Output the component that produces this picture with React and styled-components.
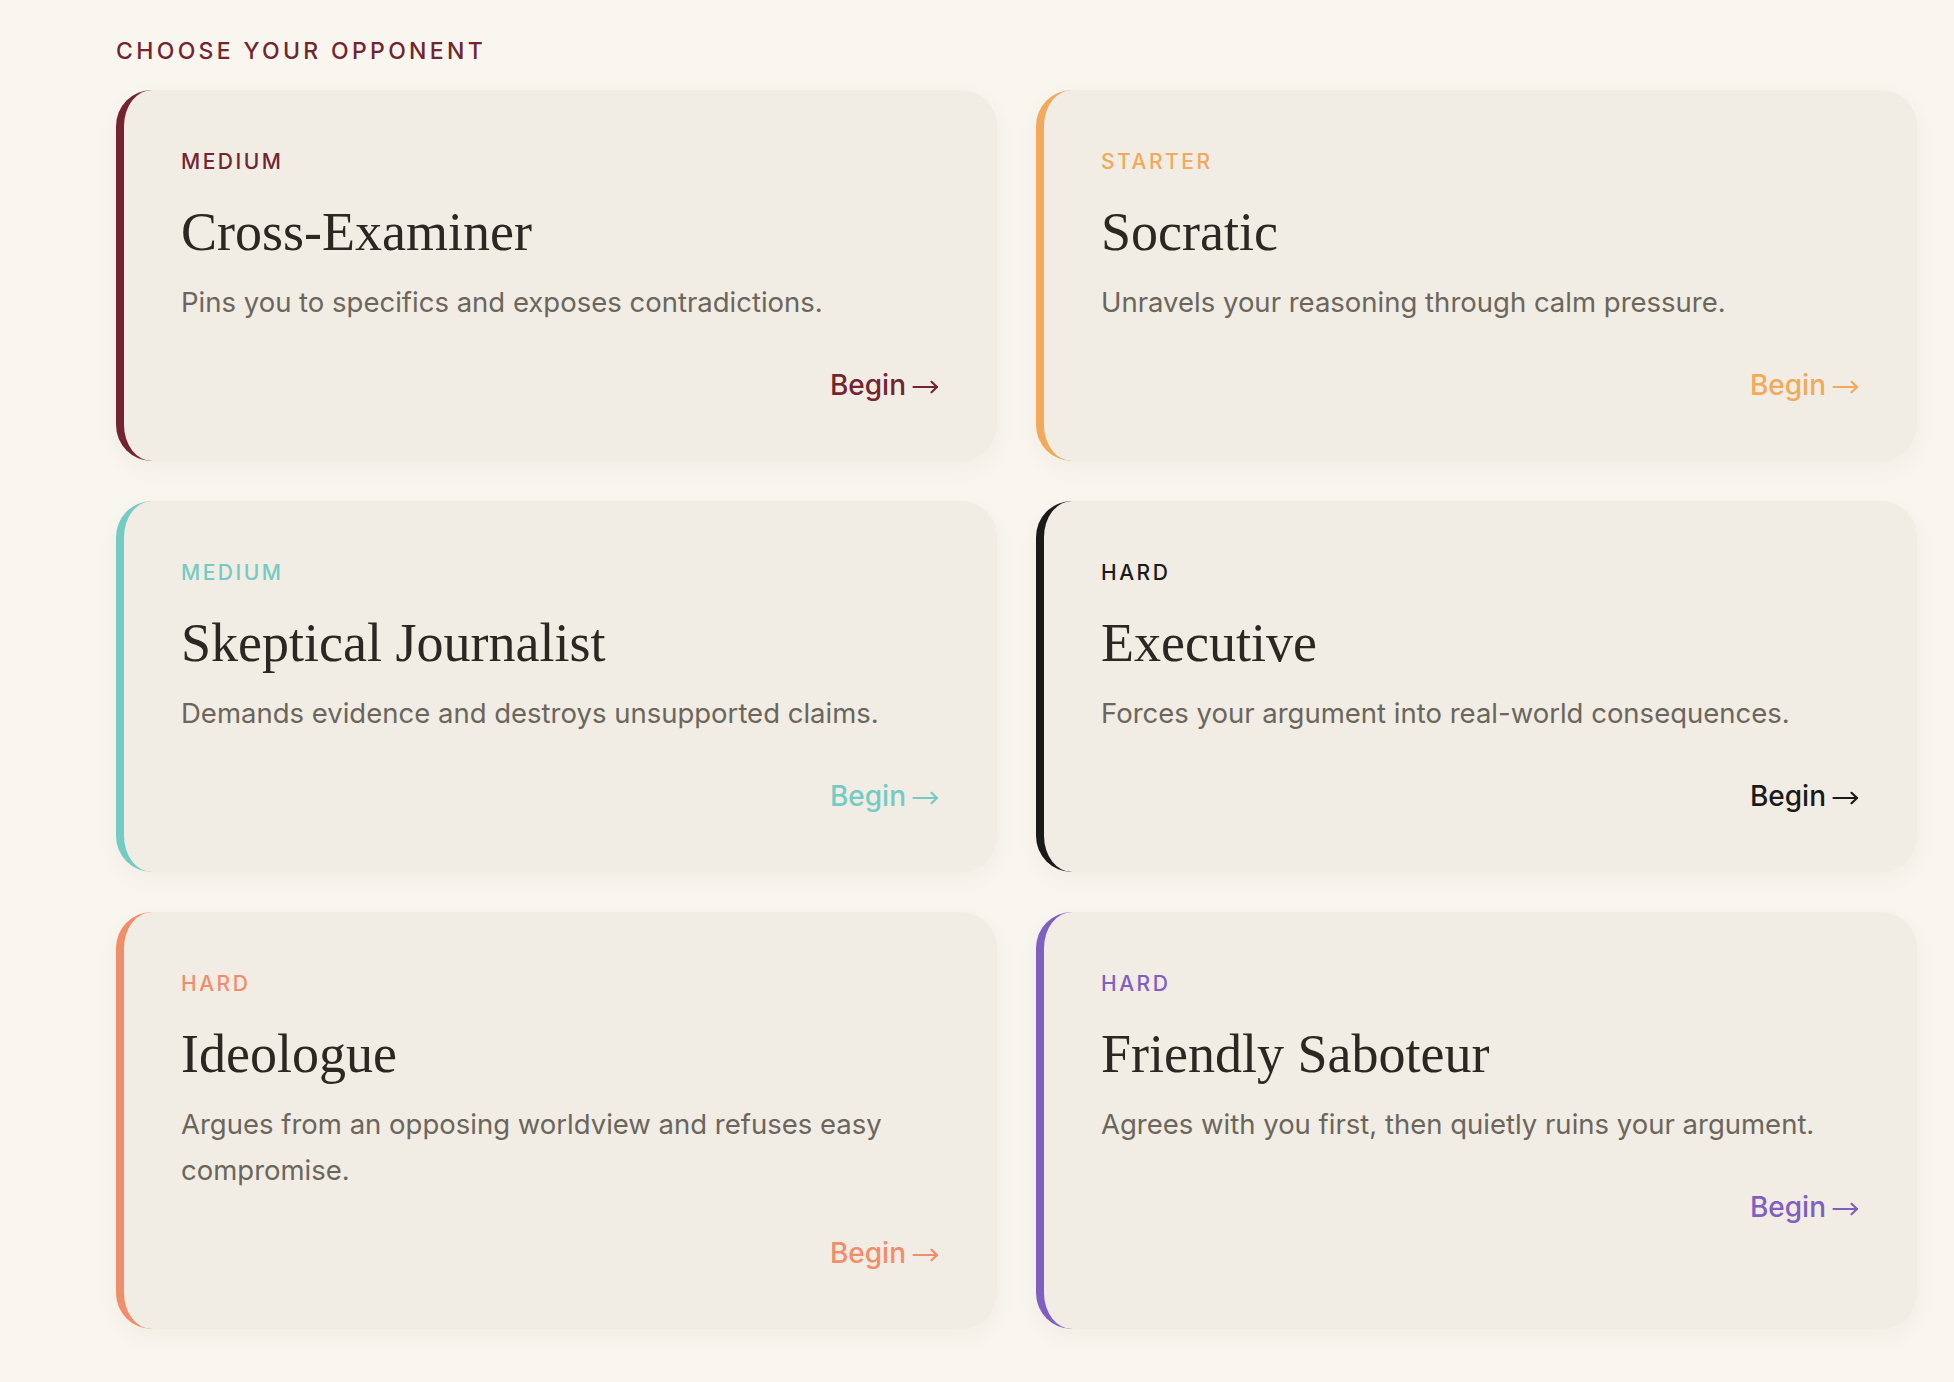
import React from "react";
import styled, { createGlobalStyle } from "styled-components";

const GlobalStyle = createGlobalStyle`
  html, body {
    margin: 0;
    padding: 0;
    background: #f9f6ef;
  }
  * { box-sizing: border-box; }
`;

const Page = styled.main`
  padding: 37px 37px 52px 116px;
  font-family: Inter, "Noto Sans", sans-serif;
`;

const Heading = styled.h2`
  margin: 0 0 25px;
  font-size: 23px;
  line-height: 28px;
  font-weight: 500;
  letter-spacing: 0.145em;
  color: #722530;
  text-transform: uppercase;
`;

const Grid = styled.div`
  display: grid;
  grid-template-columns: 1fr 1fr;
  gap: 40px 39px;
`;

const Card = styled.article`
  display: flex;
  flex-direction: column;
  background: #f1ece4;
  border-left: 8px solid ${(p) => p.$accent};
  border-radius: 36px;
  padding: 59px 58px 59px 57px;
  box-shadow: 0 8px 22px rgba(60, 40, 20, 0.045);
`;

const Level = styled.span`
  font-size: 21px;
  line-height: 26px;
  font-weight: 500;
  letter-spacing: 0.12em;
  text-transform: uppercase;
  color: ${(p) => p.$accent};
`;

const Title = styled.h3`
  margin: 26px 0 0;
  font-family: "Liberation Serif", "Times New Roman", serif;
  font-weight: 400;
  font-size: 54px;
  line-height: 63px;
  color: #2b2723;
`;

const Description = styled.p`
  margin: 15px 0 0;
  font-size: 27.5px;
  line-height: 46px;
  color: #6b665c;
`;

const Footer = styled.div`
  display: flex;
  justify-content: flex-end;
  margin-top: 43px;
`;

const BeginLink = styled.a`
  font-size: 28px;
  line-height: 34px;
  font-weight: 500;
  color: ${(p) => p.$accent};
  text-decoration: none;
  cursor: pointer;
  display: inline-flex;
  align-items: center;
  gap: 6px;
`;

const Arrow = styled.svg`
  width: 27px;
  height: 14px;
  margin-top: 3px;
  flex: none;
`;

const ArrowIcon = () => (
  <Arrow viewBox="0 0 27 14" fill="none" stroke="currentColor" strokeWidth="2.2" strokeLinecap="round" strokeLinejoin="round">
    <path d="M1.5 7H25" />
    <path d="M19.5 1.8L25 7l-5.5 5.2" />
  </Arrow>
);

const opponents = [
  {
    level: "Medium",
    name: "Cross-Examiner",
    desc: "Pins you to specifics and exposes contradictions.",
    accent: "#722530",
  },
  {
    level: "Starter",
    name: "Socratic",
    desc: "Unravels your reasoning through calm pressure.",
    accent: "#f2a95a",
  },
  {
    level: "Medium",
    name: "Skeptical Journalist",
    desc: "Demands evidence and destroys unsupported claims.",
    accent: "#74cbc4",
  },
  {
    level: "Hard",
    name: "Executive",
    desc: "Forces your argument into real-world consequences.",
    accent: "#1a1a1a",
  },
  {
    level: "Hard",
    name: "Ideologue",
    desc: "Argues from an opposing worldview and refuses easy compromise.",
    accent: "#f08e6c",
  },
  {
    level: "Hard",
    name: "Friendly Saboteur",
    desc: "Agrees with you first, then quietly ruins your argument.",
    accent: "#7f5fbf",
  },
];

export default function App() {
  return (
    <>
      <GlobalStyle />
      <Page>
        <Heading>Choose your opponent</Heading>
        <Grid>
          {opponents.map((o) => (
            <Card key={o.name} $accent={o.accent}>
              <Level $accent={o.accent}>{o.level}</Level>
              <Title>{o.name}</Title>
              <Description>{o.desc}</Description>
              <Footer>
                <BeginLink $accent={o.accent}>
                  Begin
                  <ArrowIcon />
                </BeginLink>
              </Footer>
            </Card>
          ))}
        </Grid>
      </Page>
    </>
  );
}
